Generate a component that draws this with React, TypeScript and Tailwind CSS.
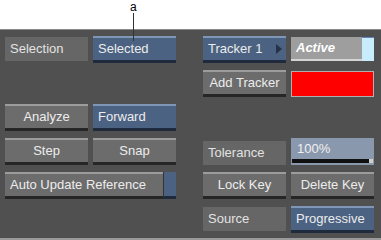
import React from "react";

type Tone = "gray" | "blue";

const font = { fontFamily: '"Liberation Sans", Arial, sans-serif' };

function Label({ children }: { children: React.ReactNode }) {
  return (
    <div className="mt-[1px] flex h-[24px] items-center bg-[#666666] pl-[5px] text-[13px] text-[#e2e2e2]">
      {children}
    </div>
  );
}

function Button({
  children,
  tone = "gray",
  align = "center",
}: {
  children: React.ReactNode;
  tone?: Tone;
  align?: "center" | "left";
}) {
  const toneClass =
    tone === "blue"
      ? "bg-[#4b6282] border-t-[#7f97b6] border-b-[#1f2a3c]"
      : "bg-[#6c6c6c] border-t-[#9c9c9c] border-b-[#262626]";
  return (
    <div
      className={`flex h-[27px] items-center whitespace-nowrap border-t-2 border-b-[3px] text-[13px] text-[#ececec] ${toneClass} ${
        align === "center" ? "justify-center" : "pl-[5px]"
      }`}
    >
      {children}
    </div>
  );
}

const grid = "grid grid-cols-[83px_83px] grid-rows-[27px_27px_27px_27px_27px_27px] gap-x-[5px] gap-y-[7px]";

export default function App() {
  return (
    <div className="relative h-[240px] w-[381px] bg-white" style={font}>
      <div className="absolute left-[130px] top-0 text-[12px] leading-[14px] text-black">a</div>
      <div className="absolute left-[133px] top-[13px] z-10 h-[28px] w-px bg-[#333]" />
      <div className="h-[29px]" />
      <div className="flex h-[209px] gap-x-[27px] border-t border-[#8c8c8c] bg-[#505050] pl-[5px] pt-[6px]">
        {/* left column */}
        <div className={grid}>
          <Label>Selection</Label>
          <Button tone="blue" align="left">Selected</Button>

          <div />
          <div />

          <Button>Analyze</Button>
          <Button tone="blue" align="left">Forward</Button>

          <Button>Step</Button>
          <Button>Snap</Button>

          <div className="col-span-2 flex">
            <div className="flex-1">
              <Button align="left">Auto Update Reference</Button>
            </div>
            <div className="w-[13px] border-b-[3px] border-l border-b-[#1f2a3c] border-l-[#333] bg-[#4b6282]" />
          </div>

          <div />
          <div />
        </div>

        {/* right column */}
        <div className={grid}>
          <Button tone="blue" align="left">
            <span className="flex w-full items-center justify-between pr-[4px]">
              Tracker 1
              <span className="h-0 w-0 border-y-[5px] border-l-[6px] border-y-transparent border-l-[#26324a]" />
            </span>
          </Button>
          <div className="mt-[1px] flex h-[24px]">
            <div className="flex flex-1 items-center border-b-2 border-b-[#d4d4d4] bg-[#9e9e9e] pl-[5px] text-[13px] font-bold italic text-white">
              Active
            </div>
            <div className="w-[12px] border-t border-[#5c86c0] bg-[#c9ecfd]" />
          </div>

          <Button>Add Tracker</Button>
          <div className="mt-[1px] h-[26px] border border-[#b0b0b0] bg-[#ff0000]" />

          <div />
          <div />

          <div className="pt-[2px]">
            <Label>Tolerance</Label>
          </div>
          <div className="flex h-[27px] flex-col bg-[#8a98ad]">
            <div className="flex flex-1 items-center pl-[6px] text-[13px] text-[#f0f0f0]">100%</div>
            <div className="mx-[1px] mb-[2px] flex h-[4px]">
              <div className="flex-1 bg-[#111]" />
              <div className="w-[4px] bg-[#cfcfcf]" />
            </div>
          </div>

          <Button>Lock Key</Button>
          <Button>Delete Key</Button>

          <Label>Source</Label>
          <Button tone="blue" align="left">Progressive</Button>
        </div>
      </div>
      <div className="h-[2px] bg-[#9a9a9a]" />
    </div>
  );
}
